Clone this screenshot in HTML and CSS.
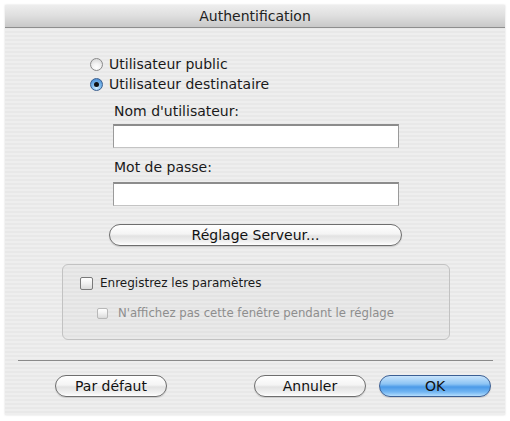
FILE: index.html
```html
<!DOCTYPE html>
<html lang="fr">
<head>
<meta charset="utf-8">
<title>Authentification</title>
<link rel="stylesheet" href="styles.css">
</head>
<body>
<div class="window">
  <div class="titlebar">Authentification</div>
  <div class="content">
    <div class="radios">
      <label class="radio-row"><span class="radio"></span>Utilisateur public</label>
      <label class="radio-row"><span class="radio on"><span class="dot"></span></span>Utilisateur destinataire</label>
    </div>
    <div class="fields">
      <div class="field-label first">Nom d'utilisateur:</div>
      <div class="input"></div>
      <div class="field-label second">Mot de passe:</div>
      <div class="input"></div>
    </div>
    <div class="server-row">
      <div class="button wide">Réglage Serveur...</div>
    </div>
    <div class="group">
      <label class="check-row"><span class="checkbox"></span>Enregistrez les paramètres</label>
      <label class="check-row sub disabled"><span class="checkbox"></span>N'affichez pas cette fenêtre pendant le réglage</label>
    </div>
    <div class="separator"></div>
    <div class="actions">
      <div class="button std">Par défaut</div>
      <div class="spacer"></div>
      <div class="button std">Annuler</div>
      <div class="button std default">OK</div>
    </div>
  </div>
</div>
</body>
</html>
```
FILE: styles.css
```css
html, body {
  margin: 0;
  padding: 0;
  background: #ffffff;
}
body {
  font-family: "DejaVu Sans", "Liberation Sans", sans-serif;
  color: #1a1a1a;
}
.window {
  margin: 5px;
  width: 500px;
  height: 410px;
  background-color: #ececec;
  background-image: repeating-linear-gradient(to bottom, #eeeeee 0px, #eeeeee 2px, #e8e8e8 2px, #e8e8e8 4px);
  box-shadow: 0 0 2px rgba(0,0,0,0.15);
  display: flex;
  flex-direction: column;
}
.titlebar {
  height: 22px;
  line-height: 22px;
  border-bottom: 1px solid #8e8e8e;
  background: linear-gradient(to bottom, #eeeeee 0%, #dedede 50%, #c8c8c8 100%);
  text-align: center;
  font-size: 14px;
  color: #222;
}
.content {
  flex: 1;
  display: flex;
  flex-direction: column;
}
.radios {
  display: flex;
  flex-direction: column;
  padding: 28px 0 0 85px;
  gap: 4px;
}
.radio-row {
  display: flex;
  align-items: center;
  font-size: 14px;
  height: 16px;
}
.radio {
  width: 13px;
  height: 13px;
  border-radius: 50%;
  border: 1px solid #8a8a8a;
  box-sizing: border-box;
  background: radial-gradient(circle at 50% 75%, #ffffff 0%, #f2f2f2 40%, #cfcfcf 100%);
  margin-right: 6px;
  display: flex;
  align-items: center;
  justify-content: center;
}
.radio.on {
  border-color: #3a5f8f;
  background: radial-gradient(circle at 50% 80%, #d6efff 0%, #7ab8ec 45%, #3c7fcc 100%);
}
.dot {
  width: 5px;
  height: 5px;
  border-radius: 50%;
  background: #111;
}
.fields {
  display: flex;
  flex-direction: column;
  padding: 11px 0 0 108px;
}
.field-label {
  font-size: 14px;
  height: 16px;
  line-height: 16px;
  padding-left: 1px;
}
.field-label.first {
  margin-bottom: 5px;
}
.field-label.second {
  margin-top: 11px;
  margin-bottom: 7px;
}
.input {
  width: 286px;
  height: 24px;
  box-sizing: border-box;
  background: #fff;
  border: 1px solid #9a9a9a;
  border-top: 2px solid #8c8c8c;
  border-bottom-color: #c4c4c4;
}
.server-row {
  padding: 18px 0 0 104px;
}
.button {
  height: 22px;
  box-sizing: border-box;
  border: 1px solid #6e6e6e;
  border-radius: 11px;
  background: linear-gradient(to bottom, #ffffff 0%, #f4f4f4 45%, #e2e2e2 55%, #f2f2f2 85%, #ffffff 100%);
  display: flex;
  align-items: center;
  justify-content: center;
  font-size: 14px;
  color: #111;
  box-shadow: 0 1px 1px rgba(0,0,0,0.15);
}
.button.wide {
  width: 293px;
}
.group {
  margin: 18px 0 0 57px;
  width: 388px;
  height: 76px;
  box-sizing: border-box;
  border: 1px solid #c2c2c2;
  border-radius: 6px;
  background: rgba(0,0,0,0.02);
  display: flex;
  flex-direction: column;
  padding: 11px 0 0 17px;
  gap: 16px;
}
.check-row {
  display: flex;
  align-items: center;
  font-size: 12px;
  height: 14px;
}
.checkbox {
  width: 13px;
  height: 13px;
  box-sizing: border-box;
  border: 1px solid #7a7a7a;
  border-radius: 2px;
  background: linear-gradient(to bottom, #ffffff 0%, #f0f0f0 50%, #dadada 100%);
  margin-right: 7px;
}
.check-row.sub {
  padding-left: 17px;
  font-size: 11.7px;
}
.check-row.disabled {
  color: #8e8e8e;
}
.check-row.disabled .checkbox {
  width: 11px;
  height: 11px;
  border-color: #b8b8b8;
  margin-right: 10px;
}
.separator {
  margin: 20px 0 0 13px;
  width: 475px;
  height: 1px;
  background: #8a8a8a;
}
.actions {
  display: flex;
  padding: 14px 0 0 50px;
  width: 436px;
}
.spacer {
  flex: 1;
}
.button.std {
  width: 112px;
}
.button.std + .button.std {
  margin-left: 13px;
}
.button.default {
  border-color: #3b5f94;
  background: linear-gradient(to bottom, #c8e4fc 0%, #8cc4f4 40%, #4b9ae8 55%, #73b6f2 80%, #b4ddfc 100%);
}
```
